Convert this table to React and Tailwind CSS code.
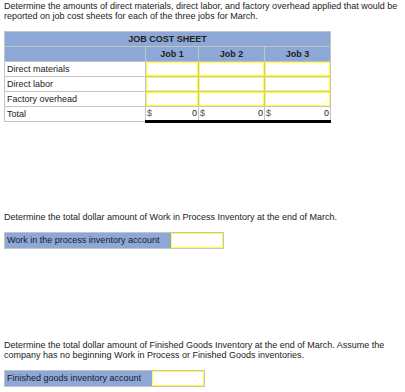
import React from "react";

const rows = ["Direct materials", "Direct labor", "Factory overhead"];
const jobs = ["Job 1", "Job 2", "Job 3"];

const AmountInput = () => (
    <input type="text" className="block w-full h-[14px] border border-[#ffff33] bg-white outline-none text-[9px] px-1 text-right" />
);

const AccountRow = ({ label, labelWidth }) => (
    <div className="flex border border-[#c4c4c4] w-fit">
        <div className={ `${labelWidth} h-[15px] bg-[#8da8d6] pl-[2px] leading-[15px] text-[#1a1a2e]` }>{ label }</div>
        <div className="w-[52px] h-[15px] p-0">
            <input type="text" className="block w-full h-full border border-[#ffff33] bg-white outline-none" />
        </div>
    </div>
);

const App = () => {
    return (
        <div className="font-['Liberation_Sans',Arial,sans-serif] text-[9px] text-[#222] bg-white w-[405px] h-[392px] pt-px">
            <p className="leading-[10px] pl-[4px]">
                Determine the amounts of direct materials, direct labor, and factory overhead applied that would be reported on job cost sheets for each of the three jobs for March.
            </p>

            <table className="mt-[10px] ml-[4px] border-collapse border border-[#c4c4c4] table-fixed w-[327px]">
                <colgroup>
                    <col className="w-[141px]" />
                    <col className="w-[53px]" />
                    <col className="w-[66px]" />
                    <col className="w-[66px]" />
                </colgroup>
                <thead>
                    <tr className="h-[15px] bg-[#8da8d6]">
                        <th colSpan={ 4 } className="border border-[#c4c4c4] p-0 font-bold text-center leading-[14px]">JOB COST SHEET</th>
                    </tr>
                    <tr className="h-[15px] bg-[#8da8d6]">
                        <th className="border border-[#c4c4c4] p-0"></th>
                        { jobs.map(job => (
                            <th key={ job } className="border border-[#c4c4c4] p-0 font-bold text-center leading-[14px]">{ job }</th>
                        )) }
                    </tr>
                </thead>
                <tbody>
                    { rows.map(row => (
                        <tr key={ row } className="h-[15px]">
                            <td className="border border-[#c4c4c4] p-0 pl-[2px] leading-[14px]">{ row }</td>
                            { jobs.map(job => (
                                <td key={ job } className="border border-[#c4c4c4] p-0">
                                    <AmountInput />
                                </td>
                            )) }
                        </tr>
                    )) }
                    <tr className="h-[15px]">
                        <td className="border border-[#c4c4c4] p-0 pl-[2px] leading-[14px]">Total</td>
                        { jobs.map(job => (
                            <td key={ job } className="border-t border-t-black border-b-[3px] border-b-black border-x border-x-[#c4c4c4] p-0 leading-[13px]">
                                <div className="flex justify-between px-px">
                                    <span className="text-[#555]">$</span>
                                    <span>0</span>
                                </div>
                            </td>
                        )) }
                    </tr>
                </tbody>
            </table>

            <p className="mt-[89px] pl-[4px] leading-[10px]">
                Determine the total dollar amount of Work in Process Inventory at the end of March.
            </p>
            <div className="mt-[10px] ml-[4px]">
                <AccountRow label="Work in the process inventory account" labelWidth="w-[166px]" />
            </div>

            <p className="mt-[91px] pl-[4px] pr-2 leading-[10px]">
                Determine the total dollar amount of Finished Goods Inventory at the end of March. Assume the company has no beginning Work in Process or Finished Goods inventories.
            </p>
            <div className="mt-[10px] ml-[4px]">
                <AccountRow label="Finished goods inventory account" labelWidth="w-[147px]" />
            </div>
        </div>
    );
};

export default App;
